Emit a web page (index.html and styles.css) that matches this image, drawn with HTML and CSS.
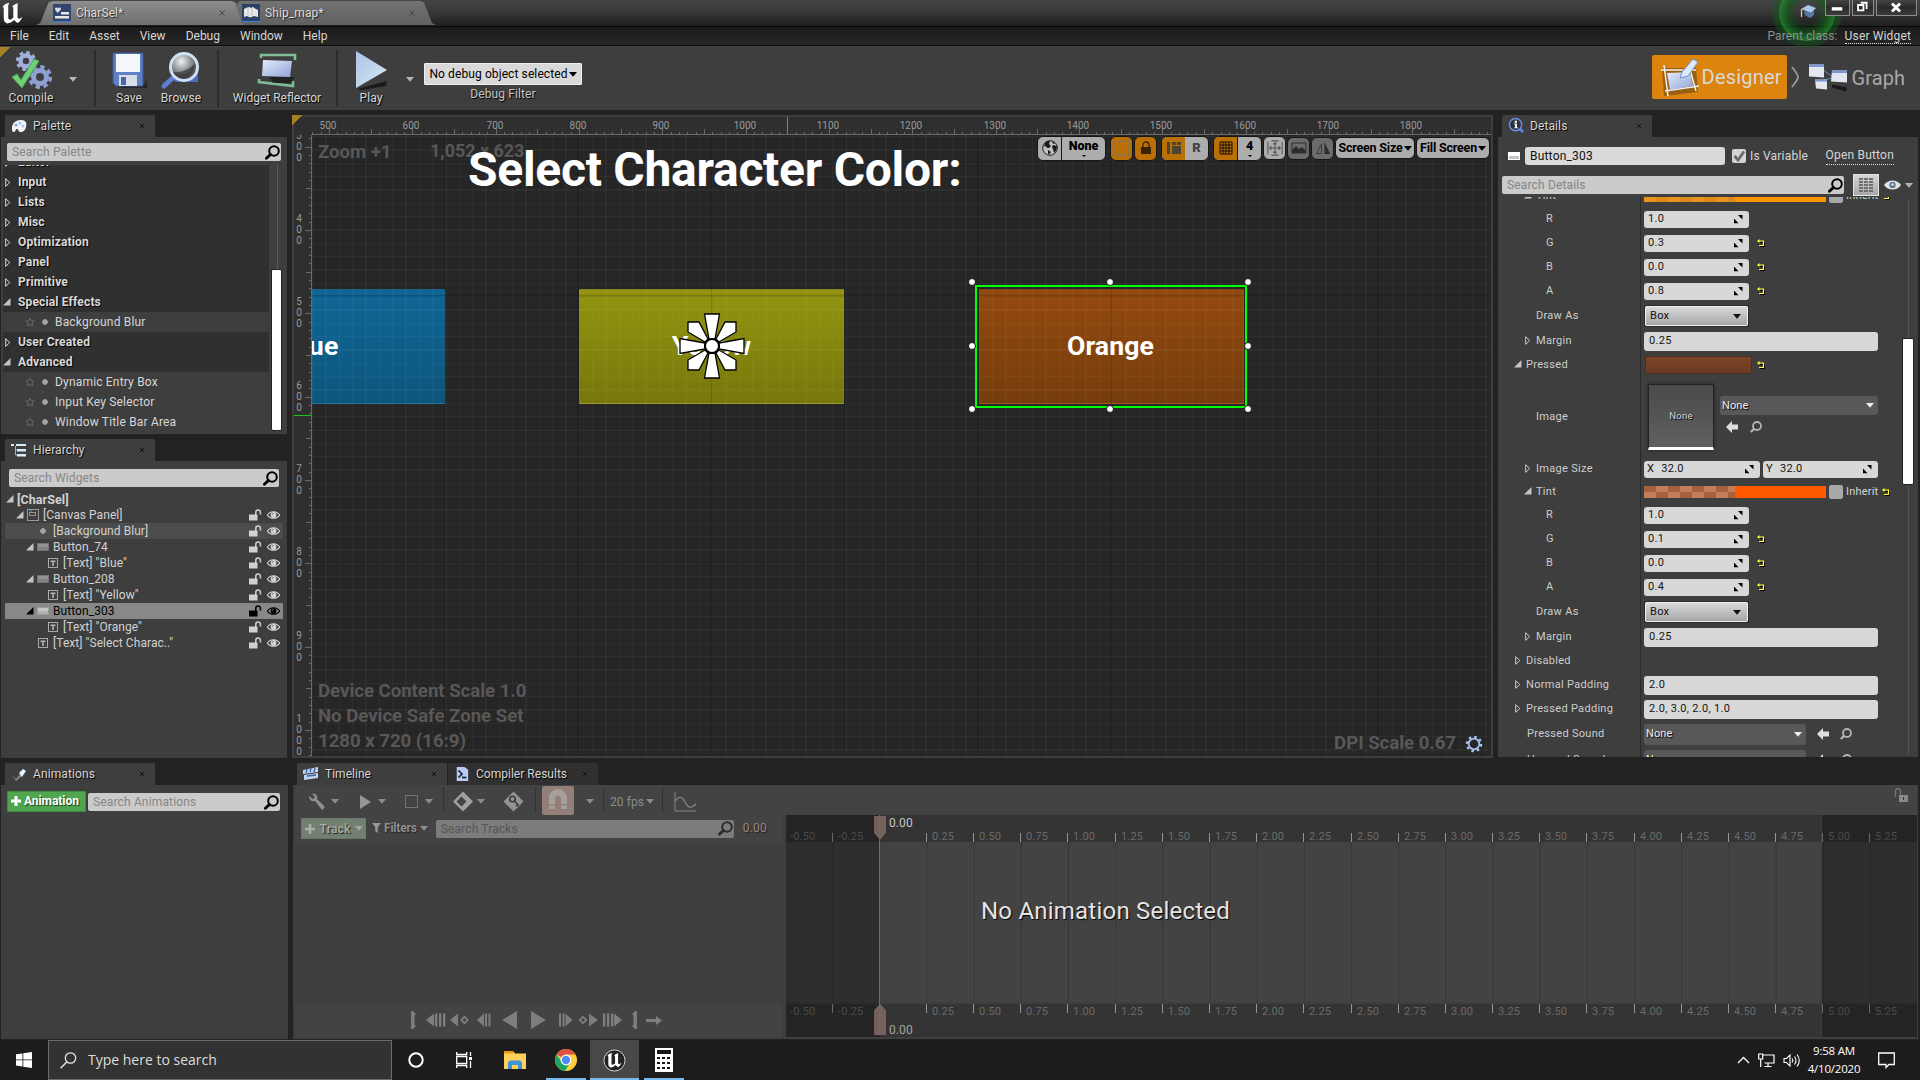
FILE: index.html
```html
<!DOCTYPE html>
<html lang="en">
<head>
<meta charset="utf-8">
<title>CharSel</title>
<link rel="stylesheet" href="styles.css">
</head>
<body>
<svg class="defs" width="0" height="0">
  <defs>
    <linearGradient id="steel" x1="0" y1="0" x2="1" y2="1"><stop offset="0" stop-color="#e4ecfb"/><stop offset="1" stop-color="#8fa3d6"/></linearGradient>
    <linearGradient id="playg" x1="0" y1="0" x2="1" y2="1"><stop offset="0" stop-color="#aebfe8"/><stop offset=".6" stop-color="#c3dbee"/><stop offset="1" stop-color="#dfe8fa"/></linearGradient>
    <radialGradient id="lens" cx=".4" cy=".3" r=".8"><stop offset="0" stop-color="#f2f2f2"/><stop offset=".45" stop-color="#8c8f94"/><stop offset="1" stop-color="#26282c"/></radialGradient>
    <symbol id="mag" viewBox="0 0 15 15"><circle cx="9" cy="6" r="4.8" fill="none" stroke="currentColor" stroke-width="2"/><path d="M5.6 9.4 1.4 13.2" stroke="currentColor" stroke-width="2.8" stroke-linecap="round"/></symbol>
    <symbol id="lock" viewBox="0 0 13 12"><path d="M0 5.500h8.500V11.500H0z" fill="currentColor"/><path d="M6.800 6V3.200a2.300 2.300 0 0 1 4.600 0V5.500" fill="none" stroke="currentColor" stroke-width="1.500"/></symbol>
    <symbol id="eye" viewBox="0 0 13 10"><path d="M.4 5C3.4.6 9.600.6 12.600 5 9.600 9.400 3.400 9.400.4 5z" fill="none" stroke="currentColor" stroke-width="1.100"/><circle cx="6.500" cy="5" r="2.900" fill="currentColor"/><circle cx="5.600" cy="4" r=".8" fill="#777"/></symbol>
    <symbol id="open" viewBox="0 0 8 8"><path d="M7.500 0v7.500H0z" fill="currentColor"/></symbol>
    <symbol id="shut" viewBox="0 0 6 9"><path d="M.7.700v7.600L4.800 4.500z" fill="none" stroke="currentColor"/></symbol>
    <symbol id="down" viewBox="0 0 8 5"><path d="M0 0h8L4 4.800z" fill="currentColor"/></symbol>
    <symbol id="star" viewBox="0 0 10 10"><path d="M5 1l1.200 2.700 3 .3-2.200 2 .6 3L5 7.500 2.400 9 3 6 .8 4l3-.3z" fill="none" stroke="#686868"/></symbol>
    <symbol id="dot" viewBox="0 0 6 6"><path d="M2.300 0h1.400L6 2.300v1.400L3.700 6H2.300L0 3.700V2.300z" fill="#a4a4a4"/></symbol>
    <symbol id="txt" viewBox="0 0 10 10"><rect x=".5" y=".5" width="9" height="9" fill="none" stroke="#aaa"/><path d="M2.500 2.500h5v1.600h-1.700V8H4.200V4.100H2.500z" fill="#b4b4b4"/></symbol>
    <symbol id="btn" viewBox="0 0 12 8"><path d="M0 0h12v8H0z" fill="#737373"/><path d="M1 1h10v3H1z" fill="#929292"/><path d="M1 4h10v3H1z" fill="#838383"/></symbol>
    <symbol id="canvas" viewBox="0 0 12 12"><rect x=".5" y=".5" width="11" height="11" fill="none" stroke="#999"/><path d="M2.500 3.500h6v3h-6z" fill="none" stroke="#9a9a9a"/><path d="M4 1v2" stroke="#3aa0e0"/></symbol>
    <symbol id="spin" viewBox="0 0 9 9"><path d="M4 0h4.500v4.500zM0 3.500 4.500 8.200H0z" fill="#000"/></symbol>
    <symbol id="reset" viewBox="0 0 8 8"><path d="M1 2.500h5.500v4H2" fill="none" stroke="#000" transform="translate(1 1)"/><path d="M1 2h5.500v4.500H2" fill="none" stroke="#ffff3c" stroke-width="1.200"/><path d="M0 2 2.500 0v4z" fill="#ffff3c"/></symbol>
    <symbol id="use" viewBox="0 0 12 12"><path d="M0 6 6 0v3.500h6v5H6V12z" fill="#ddd"/></symbol>
    <symbol id="find" viewBox="0 0 12 12"><circle cx="7" cy="5" r="4" fill="none" stroke="#b4b4b4" stroke-width="1.800"/><path d="M4.400 7.600.8 11" stroke="#b4b4b4" stroke-width="2.200"/></symbol>
    <symbol id="x" viewBox="0 0 6 6"><path d="M.5.500l5 5m0-5-5 5" stroke="currentColor" fill="none"/></symbol>
    <symbol id="ue" viewBox="0 0 20 20"><path d="M1 4.800C2.200 2.600 4 1.200 6.800.800L7.200 1.300C6.600 1.700 6.300 2.300 6.300 3.300V13.500C6.300 14.800 7 15.300 7.800 15.300 8.900 15.300 9.900 14.600 10.700 13.500V5.300C10.700 4.300 10.300 3.900 9.500 4.100 10.900 2.500 12.600 1.500 14.800 1.100 14.500 2 14.400 2.700 14.400 3.700V12.800C14.400 14 15 14.500 15.800 14.500 16.800 14.400 17.800 13.600 18.600 12.500 17.900 14.900 16.500 17 14.300 18.300L11.200 15.600C9.500 17.400 7.600 18.400 5.300 18.600 3.400 17.900 2.400 16.500 2.400 14.400V5.600C2.400 4.500 1.900 4.300 1 4.800z" fill="currentColor"/></symbol>
  </defs>
</svg>

<header class="titlebar">
  <svg class="ue-logo"><use href="#ue"/></svg>
  <div class="wtabs">
    <div class="wtab active">
      <svg class="ticon" viewBox="0 0 18 18"><path d="M0 0h18v17H0z" fill="#33466e"/><path d="M0 17h18v1H0z" fill="#3f78d0"/><path d="M2 5.500 4.500 9 8 5.500C8 3 5 3 4.700 4.500 4 3 2 3 2 5.500z" fill="#ddd"/><path d="M8 8h8v2.500H8zM2 12h14v2.500H2z" fill="#e6e6e6"/></svg>
      <span>CharSel*</span><svg class="cx"><use href="#x"/></svg>
    </div>
    <div class="wtab second">
      <svg class="ticon" viewBox="0 0 18 18"><path d="M0 0h18v17H0z" fill="#2b4168"/><path d="M0 17h18v1.500H0z" fill="#3f83e8"/><path d="M2 13V5l3-1.500L8 3v1l3-1 2 1.500L16 6v7l-4-1-4 1.500L5 12z" fill="#e8e8e8"/><path d="M6 4v8M10 4v8" stroke="#c2c2c2"/></svg>
      <span>Ship_map*</span><svg class="cx"><use href="#x"/></svg>
    </div>
  </div>
  <div class="winbtns">
    <b><svg viewBox="0 0 24 15"><path d="M6 7.500h11v3.500H6z" fill="#fff"/></svg></b>
    <b class="mid"><svg viewBox="0 0 22 15"><path d="M8.500 3h6.500v7M5.500 5.500h6v6h-6z" fill="none" stroke="#fff" stroke-width="2"/></svg></b>
    <b class="wide"><svg viewBox="0 0 39 15"><path d="m15 3.500 8 8m0-8-8 8" stroke="#fff" stroke-width="3"/></svg></b>
  </div>
</header>
<div class="halo"><svg viewBox="0 0 16 16"><path d="M1 5 8 1l8 3-5 5z" fill="#a9c6e8"/><path d="m4 7 7 2 3-3v5l-4 3-5-3z" fill="#5578a8"/><path d="M1.500 5v8" stroke="#e8c58a" stroke-width="1.300"/></svg></div>

<nav class="menubar">
  <span>File</span><span>Edit</span><span>Asset</span><span>View</span><span>Debug</span><span>Window</span><span>Help</span>
  <em>Parent class:</em><a>User Widget</a>
</nav>

<section class="toolbar">
  <i class="fold"></i>
  <div class="tool t-compile">
    <svg viewBox="0 0 44 42"><g fill="none" stroke="#9fb0dc"><circle cx="17" cy="11" r="5.500" stroke-width="4.500"/><circle cx="17" cy="11" r="8.600" stroke-width="3" stroke-dasharray="3.600 3.150"/><circle cx="31" cy="27" r="6.500" stroke-width="5" stroke="#8ea1d2"/><circle cx="31" cy="27" r="10.300" stroke-width="3.500" stroke-dasharray="4.300 3.790" stroke="#8ea1d2"/></g><path d="m3 27 5-3 4 6L25 9l5 2L13 38z" fill="#6fd077" stroke="#49a552"/></svg>
    <span>Compile</span>
  </div>
  <svg class="dd a1"><use href="#down"/></svg>
  <i class="tsep s1"></i>
  <div class="tool t-save">
    <svg viewBox="0 0 44 42"><path d="M10 34h28l2-5v9H14z" fill="#151515" opacity=".6"/><path d="M6 3h30v33H9l-3-3z" fill="#5e80c4" stroke="#3d5791"/><path d="M9 4h24v18H9z" fill="#f4f6fb"/><path d="M12 25h18v11H12z" fill="#d8dde8"/><path d="M14 27h5v8h-5z" fill="#4a66a8"/></svg>
    <span>Save</span>
  </div>
  <div class="tool t-browse">
    <svg viewBox="0 0 44 42"><path d="M11 10h28v22H16z" fill="#4a6fc0"/><path d="m17 25-12 11" stroke="#5e80d0" stroke-width="5" stroke-linecap="round"/><circle cx="25" cy="17" r="13.500" fill="url(#lens)" stroke="#cfe0f4" stroke-width="3"/><path d="M14 22c8 1 15-2 22-8-1 10-8 15-14 14-4-1-7-3-8-6z" fill="#222" opacity=".55"/></svg>
    <span>Browse</span>
  </div>
  <i class="tsep s2"></i>
  <div class="tool t-reflect">
    <svg viewBox="0 0 44 42"><path d="M6 8V5h34v5M4 29v3l34 4v-5" fill="none" stroke="#7fbb94" stroke-width="2.600"/><path d="M14 27h26l-4 6H18z" fill="#111" opacity=".6"/><path d="m8 10 29 1-2 16-28-1z" fill="url(#steel)"/></svg>
    <span>Widget Reflector</span>
  </div>
  <i class="tsep s3"></i>
  <div class="tool t-play">
    <svg viewBox="0 0 44 42"><path d="m8 39 30-8-1 5-24 4z" fill="#111" opacity=".8"/><path d="M7 1v37l31-18z" fill="url(#playg)"/></svg>
    <span>Play</span>
  </div>
  <svg class="dd a2"><use href="#down"/></svg>
  <div class="dbg"><div class="dbgbox">No debug object selected<svg class="dd"><use href="#down"/></svg></div><span>Debug Filter</span></div>
  <div class="modes">
    <div class="mode on">
      <svg viewBox="0 0 44 42"><path d="M6 12h34l2 24-34 4z" fill="#1c1c1c" opacity=".35"/><path d="M5 14h35M9 35l34-5M8 9l4 31M33 10l7 25" stroke="#f3f3f3" stroke-width="1.500"/><path d="m11 17 23-1 3 14-23 4z" fill="url(#steel)"/><path d="m24 22 2-6L37 3l5 3-10 14z" fill="#dfe9fb" stroke="#6b8fd0"/></svg>
      Designer
    </div>
    <svg class="chev" viewBox="0 0 8 22"><path d="M1 1c4 5 6 8 6 10s-2 5-6 10" fill="none" stroke="#9a9a9a" stroke-width="1.800"/></svg>
    <div class="mode">
      <svg viewBox="0 0 42 30"><path d="m24 21 15 3-1 4-14-4z" fill="#1a1a1a"/><path d="m16 7 8 6M15 17l10-3" stroke="#7088c4"/><path d="M1 1h15v13L1 13z" fill="#e3e6ef"/><path d="M1 1h15v2.500H1z" fill="#7c95d4"/><path d="M24 7h15v12l-16-1z" fill="#e3e6ef"/><path d="M24 7h15v2.500H24z" fill="#7c95d4"/><path d="M7 16h12v10l-11-1z" fill="#e3e6ef"/><path d="M7 16h12v2H7z" fill="#7c95d4"/></svg>
      Graph
    </div>
  </div>
</section>

<main class="work">
  <aside class="left">
    <div class="ptab"><svg viewBox="0 0 16 14"><path d="M1 9C1 4 5 1 10 1s6 3 5 7-3 5-6 5c-2 0-1-3-3-3s-1 3-3 3S1 11 1 9z" fill="#f2f6fc"/><circle cx="5" cy="6" r="1.500" fill="#7fa8e0"/><circle cx="9" cy="4" r="1.500" fill="#9cc4ee"/><circle cx="12" cy="7" r="1.500" fill="#a9cdf0"/></svg><span>Palette</span><svg class="cx"><use href="#x"/></svg></div>
    <section class="panel palette">
      <div class="search">Search Palette<svg><use href="#mag"/></svg></div>
      <div class="plist">
        <div class="ph"><svg class="shut"><use href="#shut"/></svg>Editor</div>
        <div class="ph"><svg class="shut"><use href="#shut"/></svg>Input</div>
        <div class="ph"><svg class="shut"><use href="#shut"/></svg>Lists</div>
        <div class="ph"><svg class="shut"><use href="#shut"/></svg>Misc</div>
        <div class="ph"><svg class="shut"><use href="#shut"/></svg>Optimization</div>
        <div class="ph"><svg class="shut"><use href="#shut"/></svg>Panel</div>
        <div class="ph"><svg class="shut"><use href="#shut"/></svg>Primitive</div>
        <div class="ph"><svg class="open"><use href="#open"/></svg>Special Effects</div>
        <div class="pi"><svg class="star"><use href="#star"/></svg><svg class="dot"><use href="#dot"/></svg>Background Blur</div>
        <div class="ph"><svg class="shut"><use href="#shut"/></svg>User Created</div>
        <div class="ph"><svg class="open"><use href="#open"/></svg>Advanced</div>
        <div class="pi"><svg class="star"><use href="#star"/></svg><svg class="dot"><use href="#dot"/></svg>Dynamic Entry Box</div>
        <div class="pi"><svg class="star"><use href="#star"/></svg><svg class="dot"><use href="#dot"/></svg>Input Key Selector</div>
        <div class="pi"><svg class="star"><use href="#star"/></svg><svg class="dot"><use href="#dot"/></svg>Window Title Bar Area</div>
      </div>
      <div class="pscroll"><i></i></div>
    </section>

    <div class="ptab"><svg viewBox="0 0 16 14"><path d="M0 1h3v2H0zM5 1h10v2H5zM6 6h9v2.500H6zM6 11h9v2.500H6z" fill="#d7ecfa"/><path d="M4.500 3v9H6M4.500 7H6" stroke="#8fb8d8" fill="none"/></svg><span>Hierarchy</span><svg class="cx"><use href="#x"/></svg></div>
    <section class="panel hier">
      <div class="search">Search Widgets<svg><use href="#mag"/></svg></div>
      <div class="tree" id="tree"></div>
    </section>

    <div class="ptab"><svg viewBox="0 0 16 14"><path d="M1 8l4 4 4-5 2 2-6 5z" fill="#7b8894"/><path d="m8 6 4-4 3 2-4 6z" fill="#e4f4fc"/></svg><span>Animations</span><svg class="cx"><use href="#x"/></svg></div>
    <section class="panel anim">
      <div class="addbtn"><svg viewBox="0 0 10 10"><path d="M3.500 0h3v3.500H10v3H6.500V10h-3V6.500H0v-3h3.500z" fill="#fff"/></svg>Animation</div>
      <div class="search">Search Animations<svg><use href="#mag"/></svg></div>
    </section>
  </aside>

  <section class="view">
    <i class="fold"></i>
    <div class="hruler" id="hruler"></div>
    <div class="vruler" id="vruler"></div>
    <div class="stage">
      <div class="wbtn blue"></div>
      <div class="wbtn yellow"></div>
      <div class="wbtn orange"></div>
      <div class="grid"></div>
      <div class="hint zoom">Zoom +1</div>
      <div class="hint pos">1,052 x 623</div>
      <div class="label l-blue">Blue</div>
      <div class="label l-yellow">Yellow</div>
      <div class="label l-orange">Orange</div>
      <h1>Select Character Color:</h1>
      <svg class="flower" viewBox="-33 -33 66 66"><g fill="#fff" stroke="#000" stroke-width="1.300"><path d="M-3-7-7.500-32h15L3-7z"/><path d="M-3 7-7.500 32h15L3 7z"/><path d="M-7-3-32-7.500v15L-7 3z"/><path d="M7-3 32-7.500v15L7 3z"/><path d="M4-7 13-24h11v10L7-4z"/><path d="M-4-7-13-24h-11v10L-7-4z"/><path d="M4 7 13 24h11V14L7 4z"/><path d="M-4 7-13 24h-11V14L-7 4z"/><circle r="7" stroke-width="2"/></g></svg>
      <div class="sel"><i></i><i></i><i></i><i></i><i></i><i></i><i></i><i></i></div>
      <div class="vbar">
        <div class="grp"><b class="w23"><svg viewBox="0 0 16 16"><circle cx="8" cy="8" r="7.300" fill="#c0c0c0" stroke="#222"/><path d="M3 3c2-2 4-2 5-2L7 4l2 2-2 2-2 0-1-2-2 1zM11 5l4 1c0 3-1 5-3 7l-1-4-1-2zM6 10l3 2-2 3-1-2zM10 1l3 2-2 1z" fill="#1a1a1a"/></svg></b><b class="w45 caret">None</b></div>
        <div class="grp on g2"><b class="w22"><svg viewBox="0 0 16 16"><rect x="1" y="1" width="14" height="14" fill="none" stroke="#77776a" stroke-width="1.600" stroke-dasharray="2.500 1.500"/></svg></b></div>
        <div class="grp on g3"><b class="w22"><svg viewBox="0 0 16 16"><path d="M3 7h10v7H3z" fill="#3a2300"/><path d="M5 7V5a3 3 0 0 1 6 0v2" fill="none" stroke="#3a2300" stroke-width="1.300"/></svg></b></div>
        <div class="grp g4"><b class="w23 on"><svg viewBox="0 0 16 16"><path d="M1 2h3v12H1zM6 2h4v3H6zM11 2h4v3h-4zM6 6h9v8H6z" fill="#4a4535"/></svg></b><b class="w23 r">R</b></div>
        <div class="grp g5"><b class="w23 on"><svg viewBox="0 0 16 16"><path d="M2 2h12v12H2zM5 2v12M8 2v12M11 2v12M2 5h12M2 8h12M2 11h12" fill="none" stroke="#1b1200"/></svg></b><b class="w25 caret">4</b></div>
        <div class="grp g6"><b class="w22"><svg viewBox="0 0 18 18"><path d="M1 2v14M17 2v14M5 1h8M5 17h8M9 3v12M3 9h12M7 5l2-2 2 2M7 13l2 2 2-2M5 7 3 9l2 2M13 7l2 2-2 2" fill="none" stroke="#555" stroke-width="1.200"/></svg></b></div>
        <div class="grp off g7"><b class="w22"><svg viewBox="0 0 16 16"><path d="M1 3h14v10H1z" fill="none" stroke="#333"/><path d="M1 13V10l4-4 3 3 3-2 4 4v2z" fill="#2c2c2c"/></svg></b></div>
        <div class="grp off g8"><b class="w22"><svg viewBox="0 0 16 16"><path d="M9.500 2v12H15z" fill="#2b2b2b"/><path d="M6.500 4v9.500H1.500z" fill="none" stroke="#3c3c3c"/></svg></b></div>
        <div class="grp pill g9">Screen Size<svg class="dd"><use href="#down"/></svg></div>
        <div class="grp pill g10">Fill Screen<svg class="dd"><use href="#down"/></svg></div>
      </div>
      <div class="info">Device Content Scale 1.0<br>No Device Safe Zone Set<br>1280 x 720 (16:9)</div>
      <div class="dpi">DPI Scale 0.67<svg viewBox="0 0 18 18"><circle cx="9" cy="9" r="5.300" fill="none" stroke="#a9c0ee" stroke-width="1.800"/><circle cx="9" cy="9" r="7.200" fill="none" stroke="#a9c0ee" stroke-width="2.200" stroke-dasharray="2.600 3.050"/></svg></div>
    </div>
  </section>

  <aside class="right">
    <div class="ptab"><svg viewBox="0 0 18 18"><path d="m11 11 5 5" stroke="#5a82e0" stroke-width="3"/><circle cx="8" cy="8" r="6.500" fill="#2e3338" stroke="#6a8fe0" stroke-width="1.600"/><path d="M7 4h2.500v2H7zM6.500 7h3v4h1v1h-4v-1h1V8h-1z" fill="#fff"/></svg><span>Details</span><svg class="cx"><use href="#x"/></svg></div>
    <section class="panel details">
      <div class="d1"><svg class="bi" viewBox="0 0 12 8"><path d="M0 0h12v8H0z" fill="#fff"/><path d="M1 4h10v3H1z" fill="#c4c4c4"/></svg><div class="name">Button_303</div><div class="chk"><svg viewBox="0 0 14 14"><path d="m2.500 7 3.500 4 6-8.500" fill="none" stroke="#6b6b6b" stroke-width="2.800"/></svg></div><span>Is Variable</span><a>Open Button</a></div>
      <div class="d2"><div class="search">Search Details<svg><use href="#mag"/></svg></div><div class="gridbtn"><svg viewBox="0 0 14 14"><path d="M0 0h4v2H0zM5 0h4v2H5zM10 0h4v2h-4zM0 3h4v2H0zM5 3h4v2H5zM10 3h4v2h-4zM0 6h4v2H0zM5 6h4v2H5zM10 6h4v2h-4zM0 9h4v2H0zM5 9h4v2H5zM10 9h4v2h-4zM0 12h4v2H0zM5 12h4v2H5zM10 12h4v2h-4z" fill="#707070"/></svg></div><svg class="bigeye" viewBox="0 0 17 10"><path d="M0 5C4-1 13-1 17 5 13 11 4 11 0 5z" fill="#e4e4e4"/><circle cx="8.500" cy="5" r="3.200" fill="#5f7897"/><circle cx="8.500" cy="4.500" r="1.200" fill="#dfe8f2"/></svg><svg class="dd"><use href="#down"/></svg></div>
      <div class="drows" id="drows"></div>
      <div class="dscroll"><i></i></div>
    </section>
  </aside>

  <section class="timeline">
    <div class="tabrow">
      <div class="ptab"><svg viewBox="0 0 16 14"><path d="m0 3 15-3v5L0 7zM1 8l14-2v5L1 13z" fill="#bcd3f4"/><path d="m4 2-1 4m5-5-1 4m5-4-1 4M4 9l9-1" stroke="#41639c" stroke-width="1.400"/></svg><span>Timeline</span><svg class="cx"><use href="#x"/></svg></div>
      <div class="ptab dim"><svg viewBox="0 0 14 16"><path d="M1 0h9l4 3v13H1z" fill="#b9cbf2"/><path d="m3 4 4 4-4 4" fill="none" stroke="#16233f" stroke-width="2"/><path d="M7 12h5" stroke="#16233f" stroke-width="2"/></svg><span>Compiler Results</span><svg class="cx"><use href="#x"/></svg></div>
    </div>
    <div class="tbody">
      <div class="ttools">
        <svg class="ti wrench" viewBox="0 0 18 18"><path d="M1 3l4 3 2-2-3-3c4-1 6 2 5 5l8 8-3 3-7-9C4 9 1 7 1 3z" fill="#8f8f8f"/></svg><svg class="dd"><use href="#down"/></svg>
        <svg class="ti play" viewBox="0 0 12 14"><path d="M0 0v14l11-7z" fill="#969696"/></svg><svg class="dd"><use href="#down"/></svg>
        <svg class="ti sq" viewBox="0 0 13 13"><rect x=".5" y=".5" width="12" height="12" fill="none" stroke="#a5a5a5" stroke-dasharray="1 1"/></svg><svg class="dd"><use href="#down"/></svg>
        <i class="sp"></i>
        <svg class="ti dia" viewBox="0 0 21 21"><path d="M10 .5 20 10.500l-10 10L0 10.500z" fill="#a0a0a0"/><path d="m8.500 5.500 5 5-5 5-5-5z" fill="#434343"/></svg><svg class="dd"><use href="#down"/></svg>
        <svg class="ti dia2" viewBox="0 0 21 21"><path d="M10.500.500l10 10-10 10-10-10z" fill="#939393"/><circle cx="9.500" cy="8" r="2.800" fill="none" stroke="#3b3b3b" stroke-width="1.600"/><path d="m11.500 10 3.500 4-2 1" fill="none" stroke="#3b3b3b" stroke-width="1.600"/></svg>
        <i class="sp b"></i>
        <div class="magnet"><svg viewBox="0 0 20 22"><path d="M1 15V9a9 9 0 0 1 18 0v6h-6V9.500a3 3 0 0 0-6 0V15zM1 16.500h6V20H1zM13 16.500h6V20h-6z" fill="#a6a09d"/></svg></div><svg class="dd m"><use href="#down"/></svg>
        <i class="sp c"></i><span>20 fps</span><svg class="dd f"><use href="#down"/></svg><i class="sp d"></i>
        <svg class="ti curve" viewBox="0 0 22 20"><path d="M1 0v19h21" fill="none" stroke="#858585"/><path d="M1 9c4-5 7-5 10 1s6 7 11 2" fill="none" stroke="#858585" stroke-width="1.300"/></svg>
        <svg class="tlock" viewBox="0 0 15 14"><path d="M5 7h9v7H5z" fill="#8a8a8a"/><path d="M1.500 9V3a2.500 2.500 0 0 1 5 0v4" fill="none" stroke="#777" stroke-width="1.300"/><path d="M9.500 9v3" stroke="#333"/></svg>
      </div>
      <div class="tcols">
        <div class="tleft">
          <div class="trow"><div class="track"><svg viewBox="0 0 10 10"><path d="M3.800 0h2.400v3.800H10v2.400H6.200V10H3.800V6.200H0V3.800h3.800z" fill="#a8b0a8"/></svg>Track<svg class="dd"><use href="#down"/></svg></div><svg class="fun" viewBox="0 0 9 10"><path d="M0 0h9L5.800 4v6L3.200 8V4z" fill="#989898"/></svg><b>Filters</b><svg class="dd"><use href="#down"/></svg><div class="search">Search Tracks<svg><use href="#mag"/></svg></div><span>0.00</span></div>
          <div class="tblank"></div>
          <div class="trans"><svg viewBox="0 0 260 18" width="260" height="18"><g fill="#7e7e7e"><path d="M0 0h2l3 3-1.500 1.500v9L5 15l-3 3H0z"/><path d="m15 9 8-6.500v13zM24 2.500h2.300v13H24zM28 2.500h2.300v13H28zM32 2.500h2.300v13H32z"/><path d="m39 9 8-6.500v13z"/><path d="m53.500 4.500 4.500 4.500-4.500 4.500L49 9z"/><path d="M53.500 7 51.500 9l2 2 2-2z" fill="#434343"/><path d="m66 9 7-6.500v13zM74 2.500h2v13h-2zM77.500 2.500h2v13h-2z"/><path d="m91 9 15-9v18zM120 0v18l15-9z"/><path d="M148 2.500h2v13h-2zM151.500 2.500h2v13h-2zM154.500 2.500v13l7-6.500z"/><path d="m172 4.500 4.500 4.500-4.500 4.500L167.500 9z"/><path d="m172 7-2 2 2 2 2-2z" fill="#434343"/><path d="M178 2.500v13L187 9zM192 2.500h2.300v13H192zM196 2.500h2.300v13H196zM200 2.500h2.300v13H200zM203 2.500v13l8-6.500z"/><path d="M226 0h-2l-3 3 1.500 1.500v9L221 15l3 3h2z"/><path d="M235 8h10V5l6 4.500-6 4.500v-3h-10z"/></g></svg></div>
        </div>
        <div class="tright">
          <div class="truler" id="tr1"></div>
          <div class="tspan"><span>No Animation Selected</span></div>
          <div class="truler low" id="tr2"></div>
          <i class="shade sl"></i><i class="shade sr"></i><i class="gl"></i>
          <i class="ph1"></i><i class="ph2"></i><b class="z1">0.00</b><b class="z2">0.00</b>
        </div>
      </div>
    </div>
  </section>
</main>

<footer class="task">
  <svg class="win" viewBox="0 0 16 16"><path d="M0 2.300 6.500 1.400v6.100H0zM7.300 1.300 16 0v7.500H7.300zM0 8.300h6.500v6.200L0 13.600zM7.300 8.300H16V16l-8.700-1.300z" fill="#fff"/></svg>
  <div class="tsearch"><svg viewBox="0 0 17 17"><circle cx="10.500" cy="6" r="5.200" fill="none" stroke="#e8e8e8" stroke-width="1.300"/><path d="M6.700 10 .6 16.200" stroke="#e8e8e8" stroke-width="1.400"/></svg>Type here to search</div>
  <div class="ic first"><svg viewBox="0 0 16 16" width="16"><circle cx="8" cy="8" r="6.700" fill="none" stroke="#fff" stroke-width="2"/></svg></div>
  <div class="ic"><svg viewBox="0 0 17 16" width="17"><path d="M.7 0v2.500h10V0M.7 16v-2.500h10V16M.7 4.500h10v7H.7zM14.500 0v4M14.500 9v7" fill="none" stroke="#fff" stroke-width="1.300"/><path d="M13 5h3v3h-3z" fill="#fff"/></svg></div>
  <div class="ic wide"><svg viewBox="0 0 22 18" width="22"><path d="M0 0h9l2 2.500h11V18H0z" fill="#ffd05a"/><path d="M0 0h9v2.500H0z" fill="#e69a11"/><path d="M4 18v-6.500l2-2h10l2 2V18h-4v-4H8v4z" fill="#3b93d8"/></svg></div>
  <div class="ic run"><svg viewBox="0 0 22 22" width="22"><circle cx="11" cy="11" r="11" fill="#ffcd40"/><path d="M11 11 1.500 5.500A11 11 0 0 1 20.500 5.500H11z" fill="#dd5144"/><path d="M1.500 5.500a11 11 0 0 0 8.500 16.500l5-8.500-7.500.5z" fill="#1da462"/><circle cx="11" cy="11" r="5.400" fill="#fff"/><circle cx="11" cy="11" r="4.200" fill="#4c8bf5"/></svg></div>
  <div class="ic act"><svg viewBox="0 0 24 24" width="23"><circle cx="12" cy="12" r="11" fill="#222" stroke="#d8d8d8"/><g color="#fff" transform="translate(3.500 3.500) scale(.85)"><use href="#ue" width="20" height="20"/></g></svg></div>
  <div class="ic run"><svg viewBox="0 0 18 24" width="18" height="24"><path d="M0 0h18v24H0z" fill="#fff"/><path d="M2 2h14v4H2zM2 9h3v2H2zM7 9h3v2H7zM12 9h3v2h-3zM2 14h3v2H2zM7 14h3v2H7zM12 14h3v2h-3zM2 19h3v2H2zM7 19h3v2H7zM12 19h3v2h-3z" fill="#161616"/></svg></div>
  <div class="tray">
    <svg viewBox="0 0 13 8" width="13"><path d="m1 7 5.500-5.500L12 7" fill="none" stroke="#fff" stroke-width="1.300"/></svg>
    <svg viewBox="0 0 17 15" width="17"><path d="M4.500 2h11.500v8H6.500M10 10v3.500M6.500 13.500h7M.7 1h4v5h-4zM2.700 6v8" fill="none" stroke="#fff" stroke-width="1.200"/></svg>
    <svg viewBox="0 0 17 15" width="17"><path d="M1 5.500h2.500L7 2v11L3.500 9.500H1zM9 5.500q1.500 2 0 4M11.500 3.500q3 4 0 8M14 1.500q4.500 6 0 12" fill="none" stroke="#fff" stroke-width="1.100"/></svg>
    <div class="clock">9:58 AM<br>4/10/2020</div>
    <svg class="note" viewBox="0 0 17 17" width="17"><path d="M.7 1h15.600v11.500H11l-3 3v-3H.7z" fill="none" stroke="#fff" stroke-width="1.300"/></svg>
  </div>
</footer>
<script src="script.js"></script>
</body>
</html>
```
FILE: styles.css
```css
* { box-sizing: border-box; }
html, body { margin: 0; }
body { width: 1920px; height: 1080px; overflow: hidden; display: flex; flex-direction: column; position: relative; background: #222; color: #d6d6d6; font: 12px/16px Roboto, "Liberation Sans", sans-serif; letter-spacing: .1px; white-space: nowrap; }
svg { flex: none; display: block; }
.defs { position: absolute; }
i { display: block; font-style: normal; }
.dd { width: 8px; height: 5px; }
.fold { position: absolute; left: 0; top: 0; width: 10px; height: 10px; background: linear-gradient(135deg, #a58221 50%, transparent 51%); }

/* title bar */
.titlebar { height: 26px; flex: none; display: flex; background: linear-gradient(#454545, #3a3a3a 40%, #1f1f1f); position: relative; }
.ue-logo { width: 23px; height: 23px; margin: 2px 0 0 1px; color: #fff; }
.wtabs { display: flex; margin-left: 12px; height: 25px; align-items: flex-end; }
.wtab { height: 24px; display: flex; align-items: center; width: 210px; padding-left: 17px; background: linear-gradient(#8d8d8d, #6e6e6e); clip-path: polygon(0 100%, 2% 92%, 6% 6%, 8% 0, 93% 0, 95% 6%, 99% 92%, 100% 100%); color: #ddd; text-shadow: 1px 1px 1px #222; position: relative; z-index: 1; padding-bottom: 1px; }
.wtab.second { width: 200px; margin-left: -10px; padding-left: 6px; background: linear-gradient(#727272, #606060); clip-path: polygon(5% 100%, 3% 92%, 0 20%, 1% 6%, 2% 0, 92% 0, 94% 6%, 98% 92%, 100% 100%); }
.ticon { width: 18px; height: 18px; margin-right: 5px; }
.cx { width: 6px; height: 6px; margin-left: auto; color: #151515; }
.wtab .cx { margin-right: 21px; color: #444; }
.winbtns { margin-left: auto; display: flex; gap: 2px; margin-right: 3px; height: 16px; }
.winbtns b { width: 25px; height: 16px; border: 1px solid #8d8d8d; border-top: 0; background: linear-gradient(#444, #2a2a2a 50%, #3c3c3c); }
.winbtns .mid { width: 22px; }
.winbtns .wide { width: 41px; }
.winbtns, .menubar em, .menubar a { position: relative; z-index: 4; }
.halo { position: absolute; left: 1772px; top: -22px; width: 70px; height: 70px; border-radius: 50%; background: radial-gradient(circle, transparent 10px, #0f5a1799 19px, #1b8a27cc 27.500px, #14581b80 28.500px, #14581b66 34px, transparent 35px); z-index: 3; }
.halo svg { width: 16px; height: 16px; margin: 26px 0 0 28px; }

/* menu */
.menubar { height: 20px; flex: none; border: solid #080808; border-width: 1px 0; display: flex; align-items: center; padding: 0 9px 0 10px; background: linear-gradient(#1b1b1b, #262626); letter-spacing: 0; }
.menubar span { margin-right: 20px; }
.menubar em { font-style: normal; margin-left: auto; margin-right: 7px; color: #8f8f8f; letter-spacing: .1px; }
.menubar a { border-bottom: 1px dotted #ddd; line-height: 14px; letter-spacing: .15px; }

/* toolbar */
.toolbar { height: 64px; flex: none; display: flex; background: #3e3e3e; position: relative; border-top: 1px solid #484848; }
.tool { display: flex; flex-direction: column; align-items: center; text-shadow: 1px 1px 1px #000; }
.tool svg { width: 44px; height: 42px; margin-top: 3px; }
.tool span { margin-top: -2px; }
.t-compile { width: 56px; margin-left: 3px; }
.a1 { margin: 30px 17px 0 10px; }
.toolbar > .dd { color: #b5b5b5; }
.tsep { width: 2px; background: #2c2c2c; margin: 3px 0; }
.t-save { width: 44px; margin-left: 11px; }
.t-browse { width: 48px; margin-left: 6px; }
.s2 { margin-left: 12px; }
.t-reflect { width: 100px; margin-left: 8px; letter-spacing: 0; }
.s3 { margin-left: 9px; }
.t-play { width: 50px; margin-left: 8px; }
.a2 { margin: 30px 6px 0 10px; }
.dbg { text-align: center; padding-top: 16px; margin-left: 4px; color: #c4c4c4; }
.dbg span { display: block; margin-top: 1px; text-shadow: 1px 1px 1px #000; }
.dbgbox { width: 158px; height: 22px; background: #d9d9d9; color: #000; border: 1px solid #eee; border-radius: 1px; display: flex; align-items: center; justify-content: center; gap: 1px; text-shadow: none; letter-spacing: .1px; }
.modes { margin-left: auto; display: flex; padding: 8px 15px 0 0; height: 54px; }
.mode { display: flex; align-items: center; font-size: 20px; color: #a9a9a9; letter-spacing: .05px; }
.mode svg { width: 42px; height: 31px; margin-right: 2px; }
.mode.on { width: 135px; height: 44px; background: #dc840d; border-radius: 2px; color: #d9d9d9; padding-left: 4px; margin-right: 4px; letter-spacing: .2px; }
.mode.on svg { width: 44px; height: 42px; margin-right: 2px; }
.chev { width: 8px; height: 22px; margin: 11px 9px 0 0; }

/* work area */
.work { height: 930px; flex: none; display: grid; grid-template-columns: 292px 1206px 420px; grid-template-rows: 648px 282px; }
.left { grid-row: 1 / 3; padding-left: 1px; }
.ptab { width: 150px; height: 22px; margin: 5px 0 0 4px; background: #3e3e3e; border-radius: 2px 2px 0 0; display: flex; align-items: center; padding: 0 10px 1px 6px; text-shadow: 1px 1px 1px #000; }
.ptab svg:first-child { width: 16px; height: 14px; margin-right: 6px; }
.panel { background: #3e3e3e; width: 286px; height: 297px; position: relative; }
.search { height: 18px; background: #cbcbcb; border-radius: 2px; color: #868686; display: flex; align-items: center; justify-content: space-between; padding: 0 1px 0 5px; letter-spacing: .15px; }
.search svg { width: 15px; height: 15px; color: #000; }
.palette { padding: 6px 6px 0; display: grid; grid-template-columns: 262px 12px; grid-template-rows: 22px 267px; }
.palette .search { width: 274px; }
.plist { grid-column: 1; height: 267px; margin-left: -4px; width: 266px; overflow: hidden; display: flex; flex-direction: column; justify-content: flex-end; box-shadow: inset 0 5px 4px -3px #222; }
.ph, .pi { height: 20px; flex: none; display: flex; align-items: center; }
.ph { background: #303030; font-weight: 700; letter-spacing: .15px; text-shadow: 1px 1px 1px #000; color: #dadada; }
.shut { width: 6px; height: 9px; margin: 0 7px 0 2px; }
.open { width: 8px; height: 8px; margin-right: 7px; color: #c4c4c4; }
.pi { padding-left: 22px; letter-spacing: .18px; }
.star { width: 10px; height: 10px; margin-right: 7px; }
.dot { width: 6px; height: 6px; margin-right: 7px; }
.pscroll { width: 12px; margin-left: 2px; padding-top: 104px; background: linear-gradient(#5a5a5a, #5a5a5a) 6px 0 / 1px 100% no-repeat; }
.pscroll i { width: 11px; height: 162px; background: #fff; border: 1px solid #222; border-radius: 2px; }

.hier { padding: 8px 0 0; }
.hier .search { margin: 0 8px; width: 270px; }
.tree { padding: 4px 4px 0; }
.trw { height: 16px; display: flex; align-items: center; color: #d2d2d2; letter-spacing: .06px; }
.trw .open { margin: -1px 3px 0 0; }
.trw.root { font-weight: 700; font-size: 12.500px; padding-top: 1px; }
.trw.hov { background: #4c4c4c; }
.trw.selr { background: #888; color: #000; }
.trw.selr .open { color: #000; }
.trw.selr .wi { filter: brightness(1.350); }
.trw .lk { width: 13px; height: 12px; margin-left: auto; margin-right: 5px; }
.trw .ey { width: 13px; height: 10px; margin-right: 3px; }

.anim { height: 254px; width: 287px; padding: 6px; display: flex; }
.addbtn { width: 79px; height: 21px; background: #50a650; border: 1px solid #3f8c40; border-radius: 1px; color: #fff; font-weight: 700; display: flex; align-items: center; padding: 0 0 1px 3px; gap: 3px; text-shadow: 1px 1px 1px #1b3d1b; letter-spacing: -.05px; }
.addbtn svg { width: 10px; height: 10px; }
.anim .search { width: 192px; margin: 2px 0 0 2px; }

/* designer viewport */
.view { margin-top: 5px; width: 1201px; height: 643px; border: 2px solid #3e3e3e; position: relative; display: grid; grid-template-columns: 18px 1fr; grid-template-rows: 18px 1fr; background: #2f2f2f; }
.view > .fold { left: -2px; top: -2px; z-index: 2; }
.hruler { grid-column: 2; position: relative; border-bottom: 1px solid #6a6a6a; overflow: hidden; background: #2f2f2f; }
.vruler { grid-row: 2; grid-column: 1; position: relative; border-right: 1px solid #6a6a6a; overflow: hidden; }
.hruler span, .vruler span { position: absolute; font-size: 10px; line-height: 11px; color: #9a9a9a; letter-spacing: 0; }
.hruler span { width: 40px; text-align: center; top: 3px; }
.vruler span { left: 2px; width: 6px; text-align: center; white-space: pre; }
.hruler i, .vruler i { position: absolute; background: #6a6a6a; }
.hruler i { bottom: 0; width: 1px; }
.vruler i { right: 0; height: 1px; }
.hruler i.cur { background: #1fc41f; height: 18px; left: 475px; }
.vruler i.cur { background: #1fc41f; width: 18px; top: 280px; }
.stage { grid-column: 2; grid-row: 2; background: #262626; position: relative; overflow: hidden; }
.grid { position: absolute; inset: 0; background:
  repeating-linear-gradient(90deg, transparent 0 131.800px, #0003 132.300px 133.333px) 0.300px 0,
  repeating-linear-gradient(180deg, transparent 0 131.800px, #0003 132.300px 133.333px) 0 -105.300px,
  repeating-linear-gradient(90deg, #ffffff08 0 1.300px, transparent 1.300px 13.333px) 0 0,
  repeating-linear-gradient(180deg, #ffffff08 0 1.300px, transparent 1.300px 13.333px) 0 1px; }
.wbtn { position: absolute; top: 154px; height: 115px; width: 265px; border: 1px solid #fff1; border-radius: 1px; }
.wbtn.blue { left: -132px; background: linear-gradient(#0f6696, #0d567c); }
.wbtn.yellow { left: 267px; background: linear-gradient(#93940f, #77770d); }
.wbtn.orange { left: 667px; background: linear-gradient(#944a0e, #753d0c); }
.label { position: absolute; top: 195px; width: 265px; text-align: center; font: 700 26.670px/32px Roboto, sans-serif; color: #fff; letter-spacing: .1px; }
.l-blue { left: -133px; }
.l-yellow { left: 267px; }
.l-orange { left: 666px; }
.stage h1 { position: absolute; margin: 0; left: 156px; top: 5px; font: 700 48px/60px Roboto, sans-serif; color: #fff; letter-spacing: -.28px; }
.hint, .info, .dpi { position: absolute; font-size: 18.670px; font-weight: 700; color: #585858; letter-spacing: -.05px; }
.hint { top: 9px; }
.zoom { left: 6px; }
.pos { left: 118px; top: 8px; font-size: 18px; }
.info { left: 6px; bottom: 2px; line-height: 25px; }
.dpi { right: 8px; bottom: 3px; display: flex; align-items: center; gap: 9px; height: 20px; }
.dpi svg { width: 18px; height: 18px; margin-top: 2px; }
.flower { position: absolute; left: 367px; top: 178px; width: 66px; height: 66px; }
.sel { position: absolute; left: 663px; top: 150px; width: 272px; height: 123px; border: 2px solid #0f0; }
.sel i { position: absolute; width: 8px; height: 8px; border: 1px solid #111; background: #fff; border-radius: 50%; }
.sel i:nth-child(-n+3) { top: -9px; }
.sel i:nth-child(n+6) { bottom: -7px; }
.sel i:nth-child(4), .sel i:nth-child(5) { top: 55px; }
.sel i:nth-child(1), .sel i:nth-child(4), .sel i:nth-child(6) { left: -9px; }
.sel i:nth-child(2), .sel i:nth-child(7) { left: 129px; }
.sel i:nth-child(3), .sel i:nth-child(5), .sel i:nth-child(8) { right: -7px; }
.vbar { position: absolute; right: 1px; top: 1px; display: flex; align-items: center; height: 24px; }
.grp { display: flex; height: 25px; border: 1px solid #161616; border-radius: 6px; background: #adadad; overflow: hidden; color: #000; font-weight: 700; font-size: 12.500px; letter-spacing: -.1px; margin-left: 2px; }
.grp b { display: flex; align-items: center; justify-content: center; position: relative; }
.grp b + b { border-left: 1px solid #161616; }
.grp b svg { width: 16px; height: 16px; }
.grp.on, .grp b.on { background: #bb7006; }
.grp.off { background: #6b6b6b; height: 23px; }
.w22 { width: 21px; } .w23 { width: 23px; } .w25 { width: 24px; } .w45 { width: 44px; }
.caret { padding-bottom: 4px; }
.caret::after { content: ""; position: absolute; bottom: 3px; left: calc(50% - 2px); border: 2px solid transparent; border-top-color: #000; border-bottom: 0; }
.g2 { margin-left: 4px; } .g3 { margin-left: 1px; } .g4 { margin-left: 4px; } .g5 { margin-left: 4px; } .g6 { height: 24px; }
.grp.g4 .r { color: #444; font-size: 13px; border: 0; }
.grp.g6, .grp.g7, .grp.g8 { margin-left: 1px; }
.pill { height: 22px; width: 80px; align-items: center; justify-content: center; gap: 1px; margin-left: 1px; letter-spacing: -.2px; }
.g10 { width: 74px; }

/* details */
.right .ptab svg:first-child { width: 17px; height: 17px; margin-right: 5px; }
.details { width: 420px; height: 620px; letter-spacing: .2px; }
.d1 { padding-top: 9px; display: flex; align-items: center; padding-left: 10px; height: 29px; }
.bi { width: 12px; height: 8px; margin-right: 5px; }
.name { width: 200px; height: 18px; background: #dadada; border-radius: 3px; color: #111; padding-left: 5px; line-height: 18px; }
.chk { width: 14px; height: 14px; background: #d4d4d4; border-radius: 2px; margin: 0 4px 0 7px; }
.d1 a { margin-left: auto; margin-right: 24px; border-bottom: 1px dotted #ddd; line-height: 17px; }
.d2 { display: flex; align-items: center; height: 22px; margin: 8px 0 0 4px; }
.d2 .search { width: 342px; }
.gridbtn { width: 26px; height: 22px; margin-left: 9px; background: linear-gradient(#d5d5d5, #a8a8a8); border: 1px solid #e2e2e2; display: flex; align-items: center; justify-content: center; }
.gridbtn svg { width: 14px; height: 14px; }
.bigeye { width: 17px; height: 10px; margin: 0 4px 0 5px; }
.d2 .dd { color: #b5b5b5; }
.drows { height: 560px; margin-top: 1px; overflow: hidden; font-size: 11px; letter-spacing: .3px; background: linear-gradient(#2a2a2a, #2a2a2a) 142px 0 / 1px 100% no-repeat; }
.dr { height: 24px; display: flex; align-items: center; }
.dr:first-child { margin-top: -12px; }
.dr .lb { width: 146px; flex: none; display: flex; align-items: center; color: #cdcdcd; }
.dr .lb .shut { margin: -2px 5px 0 2px; }
.dr .lb .open { width: 8px; height: 8px; margin: -3px 4px 0 0; }
.in { height: 17px; background: #d8d8d8; border-radius: 3px; color: #141414; display: flex; align-items: center; justify-content: space-between; padding: 0 6px 0 4px; }
.in svg { width: 9px; height: 9px; }
.in.n { width: 105px; }
.in.w { width: 234px; height: 19px; padding-left: 5px; }
.in.xy { width: 116px; margin-right: 3px; padding-left: 3px; }
.in.xy u { text-decoration: none; margin-right: 7px; }
.in.xy + .in.xy { width: 115px; margin: 0; }
.rs { width: 8px; height: 8px; margin-left: 8px; }
.box { width: 103px; height: 20px; margin-left: 1px; background: linear-gradient(#d9d9d9, #a6a6a6); border: 1px solid #eee; outline: 1px solid #2a2a2a; border-radius: 1px; color: #111; display: flex; align-items: center; justify-content: space-between; padding: 0 6px 0 4px; }
.sw { width: 107px; height: 18px; border: 1px solid #4a3023; background: linear-gradient(#7c4426, #6a3b24); margin: 0 -3px 0 1px; border-radius: 2px; }
.tint { width: 182px; height: 12px; display: flex; }
.tint i { width: 91px; }
.c2 { width: 14px; height: 14px; background: #a8a8a8; border-radius: 2px; margin: 0 3px; }
.dr .inh { margin-right: -4px; letter-spacing: .2px; }
.thumb { width: 66px; height: 66px; border: 1px solid #222; box-shadow: 0 0 3px #222; background: linear-gradient(#4a4a4a, #606060); border-bottom: 3px solid #fff; font-size: 9.500px; display: flex; align-items: center; justify-content: center; margin: -1px 0 0 4px; text-shadow: 1px 1px 1px #000; }
.asset { margin: -5px 0 0 6px; width: 158px; }
.cmb { height: 19px; background: #585858; border-radius: 3px; color: #eee; display: flex; align-items: center; justify-content: space-between; padding: 0 4px 0 2px; text-shadow: 1px 1px 1px #000; letter-spacing: .1px; }
.cmb.s { width: 162px; height: 21px; padding-right: 4px; }
.ac { display: flex; gap: 12px; padding: 6px 0 0 6px; }
.ac svg, .dr > .a { width: 12px; height: 12px; }
.dr > .a { margin-left: 11px; }
.dscroll { position: absolute; left: 404px; top: 62px; width: 12px; height: 556px; padding-top: 139px; background: linear-gradient(#555, #555) 6px 0 / 1px 100% no-repeat; }
.dscroll i { width: 12px; height: 147px; background: #fff; border: 1px solid #222; border-radius: 2px; }

/* timeline */
.timeline { grid-column: 2 / 4; margin-left: 1px; }
.tabrow { display: flex; }
.tabrow .ptab + .ptab { margin-left: 1px; }
.tabrow .dim { background: #303030; }
.timeline .ptab { letter-spacing: .02px; }
.tbody { height: 254px; background: #3e3e3e; width: 1625px; padding: 0 1px 2px 2px; display: flex; flex-direction: column; }
.ttools { height: 30px; background: #434343; display: flex; align-items: center; padding: 3px 9px 0 13px; color: #8c8c8c; position: relative; }
.ttools .dd { color: #8c8c8c; margin-left: 5px; }
.ti { width: 12px; height: 14px; }
.ttools .wrench { width: 18px; height: 18px; }
.play { margin-left: 21px; } .play + .dd { margin-left: 6px; }
.sq { width: 13px; height: 13px; margin-left: 19px; } .sq + .dd { margin-left: 7px; }
.sp { width: 1px; height: 26px; background: #333; margin: -3px 9px 0 10px; }
.dia, .dia2 { width: 21px; height: 21px; } .dia + .dd { margin-left: 3px; }
.dia2 { margin-left: 18px; }
.sp.b { margin: -3px 6px 0 11px; }
.magnet { width: 32px; height: 29px; background: #927f77; border-radius: 2px; display: flex; align-items: center; justify-content: center; margin-top: -3px; }
.magnet svg { width: 20px; height: 22px; }
.ttools .dd.m { margin-left: 12px; }
.sp.c { margin: -3px 6px 0 9px; } .ttools .dd.f { margin-left: 2px; } .sp.d { margin: -3px 11px 0 8px; }
.curve { width: 22px; height: 20px; }
.tlock { width: 15px; height: 14px; margin: -14px -1px 0 auto; }
.tcols { display: flex; height: 222px; }
.tleft { width: 491px; display: flex; flex-direction: column; }
.trow { height: 27px; background: #434343; width: 487px; display: flex; align-items: center; padding: 0 0 1px 6px; color: #8e8e8e; text-shadow: 1px 1px 1px #222; }
.track { width: 65px; height: 21px; background: #728072; border: 1px solid #66796a; display: flex; align-items: center; padding: 0 2px 0 3px; justify-content: space-between; font-weight: 700; color: #a2a8a2; margin-top: 1px; }
.track svg { width: 10px; height: 10px; }
.track .dd, .trow .dd { width: 8px; height: 5px; }
.trow b { margin-right: 3px; font-weight: 700; letter-spacing: -.2px; margin-left: 3px; }
.fun { width: 9px; height: 10px; margin-left: 6px; }
.trow .search { width: 298px; background: #7c7c7c; color: #565656; margin: 1px 9px 0 8px; text-shadow: none; }
.trow .search svg { color: #2b2b2b; }
.trow span { color: #97857b; letter-spacing: .2px; }
.tblank { height: 162px; background: #3f3f3f; }
.trans { height: 33px; background: #434343; width: 487px; padding: 7px 0 0 116px; }
.tright { width: 1131px; position: relative; display: flex; flex-direction: column; }
.truler { height: 27px; background: #343434; position: relative; overflow: hidden; }
.truler.low { height: 33px; margin-top: 2px; }
.truler i { position: absolute; width: 1px; height: 9px; bottom: 0; background: #969696; }
.truler.low i { top: 0; }
.truler span { position: absolute; top: 14px; font-size: 11px; line-height: 15px; color: #6a6a6a; letter-spacing: .2px; }
.truler.low span { top: 0; }
.tspan { height: 160px; background: linear-gradient(90deg, #363636 1px, transparent 1px) -1px 0 / 47.180px 100%, #434343; display: flex; align-items: center; padding: 0 0 22px 195px; font-size: 24px; color: #e4e4e4; letter-spacing: .22px; text-shadow: 1px 1px 1px #000; }
.shade { position: absolute; top: 0; bottom: 0; background: #0000004d; }
.sl { left: 0; width: 94px; } .sr { right: 0; width: 96px; border-left: 1px solid #8c1d1d; }
.gl { position: absolute; left: 93px; top: 0; bottom: 2px; width: 1px; background: #2f9a2f; }
.ph1, .ph2 { position: absolute; left: 88px; width: 12px; background: #7a6761; opacity: .93; }
.ph1 { top: 1px; height: 24px; clip-path: polygon(0 0, 100% 0, 100% 70%, 50% 100%, 0 70%); }
.ph2 { bottom: 2px; height: 31px; clip-path: polygon(50% 0, 100% 20%, 100% 100%, 0 100%, 0 20%); }
.z1, .z2 { position: absolute; left: 103px; font-weight: 400; color: #c6c6c6; }
.z1 { top: 0; } .z2 { bottom: -1px; color: #a5a5a5; }

/* taskbar */
.task { height: 40px; flex: none; background: #1c1c1c; display: flex; position: relative; font-family: "Open Sans", "Noto Sans", sans-serif; letter-spacing: 0; }
.win { width: 16px; height: 16px; margin: 12px 16px 0; }
.tsearch { width: 344px; height: 40px; background: #323232; border: 1px solid #6b6b6b; display: flex; align-items: center; font-size: 14px; padding-left: 11px; gap: 11px; color: #dcdcdc; }
.tsearch svg { width: 17px; height: 17px; }
.ic { width: 49px; display: flex; align-items: center; justify-content: center; height: 40px; }
.ic.first { width: 48px; }
.ic.wide { width: 52px; }
.run { background: linear-gradient(#76b9ed, #76b9ed) center bottom / 40px 2px no-repeat; }
.act { background: #484848; border-bottom: 2px solid #76b9ed; padding-top: 2px; }
.tray { margin-left: auto; display: flex; align-items: center; color: #fff; font-size: 12px; line-height: 18px; gap: 8px; padding-right: 25px; }
.clock { text-align: center; letter-spacing: -.2px; width: 54px; font-size: 11.500px; margin: 0 1px 0 -1px; }
.note { margin-left: 8px; }
```
FILE: script.js
```js
// Designer rulers: one unit is 0.8333 px, one tick per 10 units.
const UNIT = 5 / 6;
function ruler(id, from, to, place, length, label) {
  let html = '';
  for (let v = from; v <= to; v += 10) {
    const p = Math.round(place(v));
    const len = v % 100 === 0 ? length : v % 50 === 0 ? 5 : 2;
    html += id === 'hruler'
      ? `<i style="left:${p}px;height:${len}px"></i>`
      : `<i style="top:${p}px;width:${len}px"></i>`;
    if (v % 100 === 0) html += label(v, p);
  }
  document.getElementById(id).innerHTML = html + '<i class="cur"></i>';
}
ruler('hruler', 480, 1890, v => 17 + (v - 500) * UNIT, 6,
  (v, p) => `<span style="left:${p - 21}px">${v}</span>`);
ruler('vruler', 280, 1030, v => 95 + (v - 400) * UNIT, 6,
  (v, p) => `<span style="top:${p - 17}px">${String(v).split('').join('\n')}</span>`);

// Timeline rulers, in quarter seconds.
for (const id of ['tr1', 'tr2']) {
  let html = '';
  for (let k = -2; k <= 21; k++) {
    const x = Math.floor(93.2 + k * 47.18);
    if (k) html += `<i style="left:${x}px"></i><span style="left:${x + 6}px">${(k / 4).toFixed(2)}</span>`;
  }
  document.getElementById(id).innerHTML = html;
}

const use = (id, cls, w, h) => `<svg class="${cls}"${w ? ` style="width:${w}px;height:${h}px"` : ''}><use href="#${id}"/></svg>`;

// Hierarchy: [indent, expandable, icon, name, class]
const icons = { canvas: [12, 12], dot: [6, 6], btn: [12, 8], txt: [10, 10] };
document.getElementById('tree').innerHTML = [
  [1, 1, '', '[CharSel]', 'root'],
  [11, 1, 'canvas', '[Canvas Panel]', ''],
  [35, 0, 'dot', '[Background Blur]', 'hov'],
  [21, 1, 'btn', 'Button_74', ''],
  [43, 0, 'txt', '[Text] "Blue"', ''],
  [21, 1, 'btn', 'Button_208', ''],
  [43, 0, 'txt', '[Text] "Yellow"', ''],
  [21, 1, 'btn', 'Button_303', 'selr'],
  [43, 0, 'txt', '[Text] "Orange"', ''],
  [33, 0, 'txt', '[Text] "Select Charac.."', ''],
].map(([pad, exp, icon, name, cls]) =>
  `<div class="trw ${cls}" style="padding-left:${pad}px">${exp ? use('open', 'open') : ''}` +
  (icon ? use(icon, 'wi', ...icons[icon]) : '') +
  `<span style="margin-left:${icon === 'dot' ? 7 : icon === 'txt' ? 5 : icon ? 4 : 0}px">${name}</span>` +
  (icon ? use('lock', 'lk') + use('eye', 'ey') : '') + '</div>').join('');

// Details rows
const reset = use('reset', 'rs');
const row = (pad, arrow, name, value, h = 24) =>
  `<div class="dr" style="height:${h}px"><div class="lb" style="padding-left:${pad}px">${arrow ? use(arrow, arrow) : ''}${name}</div>${value}</div>`;
const num = (name, v, r) => row(48, '', name, `<div class="in n">${v}${use('spin', '')}</div>${r ? reset : ''}`);
const wide = v => `<div class="in w">${v}</div>`;
const drawAs = row(38, '', 'Draw As', `<div class="box">Box${use('down', 'dd')}</div>`, 26);
const margin = row(25, 'shut', 'Margin', wide('0.25'));
const checker = (a, b) => `repeating-conic-gradient(${a} 0 25%, ${b} 0 50%) 0 0/24px 12px`;
const tint = (a, b, c) => row(26, 'open', 'Tint',
  `<div class="tint"><i style="background:${checker(a, b)}"></i><i style="background:${c}"></i></div><div class="c2"></div><span class="inh">Inherit</span>${reset}`, 22);
const sound = name => row(29, '', name, `<div class="cmb s">None${use('down', 'dd')}</div>${use('use', 'a')}${use('find', 'a')}`, 26);
document.getElementById('drows').innerHTML =
  tint('#e8941f', '#dd8a1c', '#ff9500') +
  num('R', '1.0') + num('G', '0.3', 1) + num('B', '0.0', 1) + num('A', '0.8', 1) + drawAs + margin +
  row(16, 'open', 'Pressed', `<div class="sw"></div>${reset}`) +
  row(38, '', 'Image', `<div class="thumb">None</div><div class="asset"><div class="cmb">None${use('down', 'dd')}</div><div class="ac">${use('use', '')}${use('find', '')}</div></div>`, 80) +
  row(25, 'shut', 'Image Size', `<div class="in xy"><span><u>X</u>32.0</span>${use('spin', '')}</div><div class="in xy"><span><u>Y</u>32.0</span>${use('spin', '')}</div>`) +
  tint('#c57c58', '#a6603e', '#ff5a00') +
  num('R', '1.0') + num('G', '0.1', 1) + num('B', '0.0', 1) + num('A', '0.4', 1) + drawAs + margin +
  row(15, 'shut', 'Disabled', '') +
  row(15, 'shut', 'Normal Padding', wide('2.0')) +
  row(15, 'shut', 'Pressed Padding', wide('2.0, 3.0, 2.0, 1.0')) +
  sound('Pressed Sound') + sound('Hovered Sound');
```
